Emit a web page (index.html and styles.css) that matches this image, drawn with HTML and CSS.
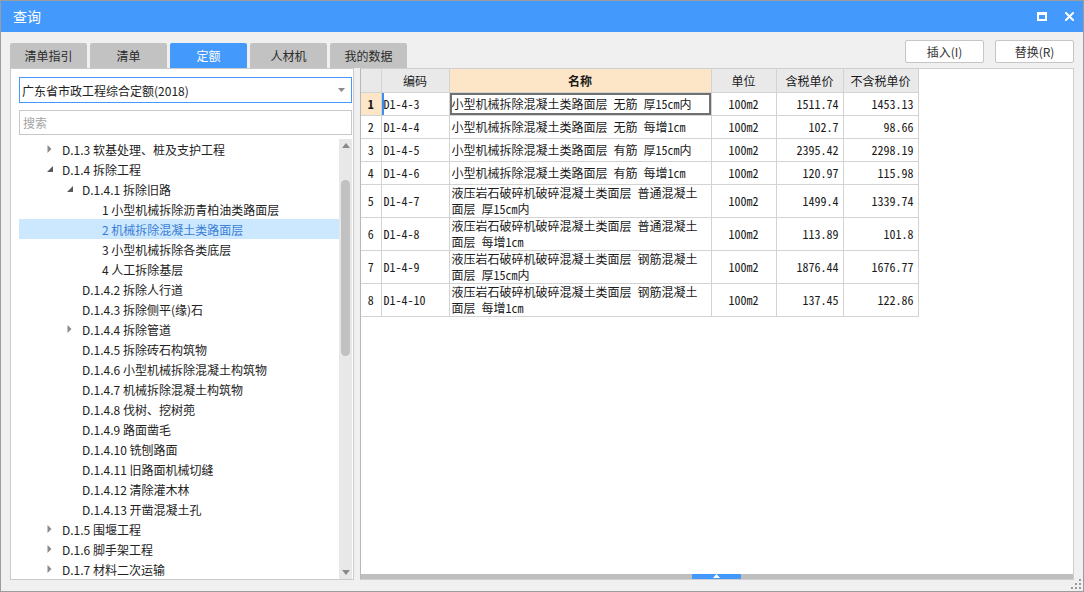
FILE: index.html
```html
<!DOCTYPE html>
<html lang="zh-CN">
<head>
<meta charset="utf-8">
<title>查询</title>
<link rel="stylesheet" href="styles.css">
</head>
<body>
<div class="window">
  <div class="titlebar">
    <span class="title">查询</span>
    <div class="win-controls">
      <svg class="win-btn" width="10" height="9" viewBox="0 0 10 9"><rect x="1" y="1.5" width="8" height="6.5" fill="none" stroke="#fff" stroke-width="2"/><rect x="0" y="0" width="10" height="3" fill="#fff"/></svg>
      <svg class="win-btn" width="9" height="9" viewBox="0 0 9 9"><path d="M1 1 L8 8 M8 1 L1 8" stroke="#fff" stroke-width="2" stroke-linecap="square"/></svg>
    </div>
  </div>
  <div class="body">
    <div class="toolbar">
      <div class="tabs">
        <div class="tab">清单指引</div>
        <div class="tab">清单</div>
        <div class="tab active">定额</div>
        <div class="tab">人材机</div>
        <div class="tab">我的数据</div>
      </div>
      <div class="actions">
        <button class="btn">插入(I)</button>
        <button class="btn">替换(R)</button>
      </div>
    </div>
    <div class="content">
      <div class="left-panel">
        <div class="select">
          <span>广东省市政工程综合定额(2018)</span>
          <svg width="7" height="4" viewBox="0 0 7 4"><path d="M0 0 L7 0 L3.5 4Z" fill="#8a8a8a"/></svg>
        </div>
        <div class="search">搜索</div>
        <div class="tree-wrap">
          <ul class="tree">
            <li class="node lv1"><span class="tw"><svg width="5" height="8" viewBox="0 0 5 8"><path d="M0.5 0 L4.5 4 L0.5 8Z" fill="#8a8a8a"/></svg></span>D.1.3 软基处理、桩及支护工程</li>
            <li class="node lv1"><span class="tw"><svg width="6" height="6" viewBox="0 0 6 6"><path d="M6 0 L6 6 L0 6Z" fill="#5a5a5a"/></svg></span>D.1.4 拆除工程</li>
            <li class="node lv2"><span class="tw"><svg width="6" height="6" viewBox="0 0 6 6"><path d="M6 0 L6 6 L0 6Z" fill="#5a5a5a"/></svg></span>D.1.4.1 拆除旧路</li>
            <li class="node lv3"><span class="tw"></span>1 小型机械拆除沥青柏油类路面层</li>
            <li class="node lv3 selected"><span class="tw"></span>2 机械拆除混凝土类路面层</li>
            <li class="node lv3"><span class="tw"></span>3 小型机械拆除各类底层</li>
            <li class="node lv3"><span class="tw"></span>4 人工拆除基层</li>
            <li class="node lv2"><span class="tw"></span>D.1.4.2 拆除人行道</li>
            <li class="node lv2"><span class="tw"></span>D.1.4.3 拆除侧平(缘)石</li>
            <li class="node lv2"><span class="tw"><svg width="5" height="8" viewBox="0 0 5 8"><path d="M0.5 0 L4.5 4 L0.5 8Z" fill="#8a8a8a"/></svg></span>D.1.4.4 拆除管道</li>
            <li class="node lv2"><span class="tw"></span>D.1.4.5 拆除砖石构筑物</li>
            <li class="node lv2"><span class="tw"></span>D.1.4.6 小型机械拆除混凝土构筑物</li>
            <li class="node lv2"><span class="tw"></span>D.1.4.7 机械拆除混凝土构筑物</li>
            <li class="node lv2"><span class="tw"></span>D.1.4.8 伐树、挖树蔸</li>
            <li class="node lv2"><span class="tw"></span>D.1.4.9 路面凿毛</li>
            <li class="node lv2"><span class="tw"></span>D.1.4.10 铣刨路面</li>
            <li class="node lv2"><span class="tw"></span>D.1.4.11 旧路面机械切缝</li>
            <li class="node lv2"><span class="tw"></span>D.1.4.12 清除灌木林</li>
            <li class="node lv2"><span class="tw"></span>D.1.4.13 开凿混凝土孔</li>
            <li class="node lv1"><span class="tw"><svg width="5" height="8" viewBox="0 0 5 8"><path d="M0.5 0 L4.5 4 L0.5 8Z" fill="#8a8a8a"/></svg></span>D.1.5 围堰工程</li>
            <li class="node lv1"><span class="tw"><svg width="5" height="8" viewBox="0 0 5 8"><path d="M0.5 0 L4.5 4 L0.5 8Z" fill="#8a8a8a"/></svg></span>D.1.6 脚手架工程</li>
            <li class="node lv1"><span class="tw"><svg width="5" height="8" viewBox="0 0 5 8"><path d="M0.5 0 L4.5 4 L0.5 8Z" fill="#8a8a8a"/></svg></span>D.1.7 材料二次运输</li>
          </ul>
          <div class="vscroll">
            <svg class="vs-arrow" width="8" height="5" viewBox="0 0 8 5"><path d="M0 5 L4 0 L8 5Z" fill="#8a8a8a"/></svg>
            <div class="vs-track"><div class="vs-thumb"></div></div>
            <svg class="vs-arrow" width="8" height="5" viewBox="0 0 8 5"><path d="M0 0 L8 0 L4 5Z" fill="#8a8a8a"/></svg>
          </div>
        </div>
      </div>
      <div class="right-panel">
        <div class="grid-area">
          <table class="grid">
            <colgroup>
              <col class="c-no"><col class="c-code"><col class="c-name"><col class="c-unit"><col class="c-tax"><col class="c-notax">
            </colgroup>
            <thead>
              <tr><th></th><th>编码</th><th class="sorted">名称</th><th>单位</th><th>含税单价</th><th>不含税单价</th></tr>
            </thead>
            <tbody>
              <tr class="r1 current"><td class="no">1</td><td class="code">D1-4-3</td><td class="name">小型机械拆除混凝土类路面层 无筋 厚15cm内</td><td class="unit">100m2</td><td class="num">1511.74</td><td class="num">1453.13</td></tr>
              <tr class="r1"><td class="no">2</td><td class="code">D1-4-4</td><td class="name">小型机械拆除混凝土类路面层 无筋 每增1cm</td><td class="unit">100m2</td><td class="num">102.7</td><td class="num">98.66</td></tr>
              <tr class="r1"><td class="no">3</td><td class="code">D1-4-5</td><td class="name">小型机械拆除混凝土类路面层 有筋 厚15cm内</td><td class="unit">100m2</td><td class="num">2395.42</td><td class="num">2298.19</td></tr>
              <tr class="r1"><td class="no">4</td><td class="code">D1-4-6</td><td class="name">小型机械拆除混凝土类路面层 有筋 每增1cm</td><td class="unit">100m2</td><td class="num">120.97</td><td class="num">115.98</td></tr>
              <tr class="r2"><td class="no">5</td><td class="code">D1-4-7</td><td class="name">液压岩石破碎机破碎混凝土类面层 普通混凝土<br>面层 厚15cm内</td><td class="unit">100m2</td><td class="num">1499.4</td><td class="num">1339.74</td></tr>
              <tr class="r2"><td class="no">6</td><td class="code">D1-4-8</td><td class="name">液压岩石破碎机破碎混凝土类面层 普通混凝土<br>面层 每增1cm</td><td class="unit">100m2</td><td class="num">113.89</td><td class="num">101.8</td></tr>
              <tr class="r2"><td class="no">7</td><td class="code">D1-4-9</td><td class="name">液压岩石破碎机破碎混凝土类面层 钢筋混凝土<br>面层 厚15cm内</td><td class="unit">100m2</td><td class="num">1876.44</td><td class="num">1676.77</td></tr>
              <tr class="r2"><td class="no">8</td><td class="code">D1-4-10</td><td class="name">液压岩石破碎机破碎混凝土类面层 钢筋混凝土<br>面层 每增1cm</td><td class="unit">100m2</td><td class="num">137.45</td><td class="num">122.86</td></tr>
            </tbody>
          </table>
        </div>
        <div class="hscroll">
          <div class="hs-thumb"><svg width="7" height="4" viewBox="0 0 7 4"><path d="M0 4 L3.5 0 L7 4Z" fill="#fff"/></svg></div>
        </div>
      </div>
    </div>
  </div>
  <svg class="grip" width="11" height="10" viewBox="0 0 11 10">
    <rect x="8" y="0" width="2" height="2" fill="#9a9a9a"/>
    <rect x="4" y="4" width="2" height="2" fill="#9a9a9a"/><rect x="8" y="4" width="2" height="2" fill="#9a9a9a"/>
    <rect x="0" y="8" width="2" height="2" fill="#9a9a9a"/><rect x="4" y="8" width="2" height="2" fill="#9a9a9a"/><rect x="8" y="8" width="2" height="2" fill="#9a9a9a"/>
  </svg>
</div>
</body>
</html>
```

FILE: styles.css
```css
* { box-sizing: border-box; }
html, body { margin: 0; padding: 0; }
body {
  font-family: "Noto Sans CJK SC", "Noto Sans", sans-serif;
  font-size: 12px;
  color: #222;
  background: #f0f0f0;
}
.window {
  position: relative;
  width: 1084px;
  height: 592px;
  border: 1px solid #9c9c9c;
  background: #f0f0f0;
  display: flex;
  flex-direction: column;
}
.titlebar {
  height: 31px;
  background: #4499fc;
  display: flex;
  align-items: center;
  justify-content: space-between;
  padding: 0 9px 0 12px;
  color: #fff;
}
.title { font-size: 14px; line-height: 31px; }
.win-controls { display: flex; align-items: center; gap: 18px; }
.win-btn { display: block; }
.body {
  flex: 1;
  padding: 8px 9px 13px 9px;
  display: flex;
  flex-direction: column;
}
.toolbar {
  height: 28px;
  display: flex;
  justify-content: space-between;
  align-items: flex-start;
}
.tabs { display: flex; gap: 3px; margin-top: 3px; }
.tab {
  width: 77px;
  height: 25px;
  line-height: 25px;
  text-align: center;
  background: #c2c2c2;
  color: #2a2a2a;
  border-radius: 2px 2px 0 0;
  font-size: 12px;
}
.tab.active { background: #4499fc; color: #fff; }
.actions { display: flex; gap: 11px; }
.btn {
  width: 79px;
  height: 23px;
  border: 1px solid #c6c6c6;
  border-radius: 2px;
  background: #fff;
  font-family: "Noto Sans CJK SC", "Noto Sans", sans-serif;
  font-size: 12px;
  color: #333;
  padding: 0;
}
.content {
  flex: 1;
  display: flex;
  gap: 6px;
  min-height: 0;
}
.left-panel {
  width: 344px;
  background: #fff;
  border: 1px solid #cacaca;
  padding: 8px 1px 0 8px;
  display: flex;
  flex-direction: column;
  min-height: 0;
}
.select {
  height: 26px;
  border: 1px solid #4499fc;
  display: flex;
  align-items: center;
  justify-content: space-between;
  padding: 0 6px 0 2px;
  font-size: 12px;
  color: #222;
}
.search {
  margin-top: 7px;
  height: 25px;
  border: 1px solid #c8c8c8;
  line-height: 23px;
  padding-left: 3px;
  color: #a4a4a4;
}
.tree-wrap {
  margin-top: 4px;
  flex: 1;
  display: flex;
  min-height: 0;
  overflow: hidden;
}
.tree {
  flex: 1;
  list-style: none;
  margin: 0;
  padding: 0;
  overflow: hidden;
}
.node {
  height: 20px;
  display: flex;
  align-items: center;
  white-space: nowrap;
  color: #222;
}
.node.selected { background: #cce8ff; color: #3a7ed6; }
.tw { width: 15px; flex: none; display: flex; align-items: center; }
.tw svg { display: block; }
.lv1 { padding-left: 28px; }
.lv2 { padding-left: 48px; }
.lv3 { padding-left: 68px; }
.vscroll {
  width: 13px;
  flex: none;
  background: #e8e8e8;
  display: flex;
  flex-direction: column;
  align-items: center;
  padding: 4px 0 4px;
}
.vs-arrow { display: block; flex: none; }
.vs-track { flex: 1; width: 100%; padding: 32px 2px 0 2px; }
.vs-thumb { height: 176px; background: #c1c1c1; border-radius: 5px; }
.right-panel {
  flex: 1;
  background: #fff;
  border: 1px solid #cfcfcf;
  border-left-color: #b8b8b8;
  display: flex;
  flex-direction: column;
  min-width: 0;
}
.grid-area { flex: 1; overflow: hidden; }
.grid {
  border-collapse: collapse;
  table-layout: fixed;
  width: 557px;
  font-family: "Noto Sans Mono CJK SC", "Noto Sans CJK SC", sans-serif;
  font-size: 12px;
  color: #1a1a1a;
}
.c-no { width: 20px; }
.c-code { width: 68px; }
.c-name { width: 262px; }
.c-unit { width: 65px; }
.c-tax { width: 67px; }
.c-notax { width: 75px; }
.grid th, .grid td { border: 1px solid #d3d3d3; padding: 0; }
.grid tr > :first-child { border-left: none; }
.grid thead tr th { border-top: none; }
.grid th {
  height: 23px;
  background: #e9e9e9;
  font-weight: normal;
  text-align: center;
  font-family: "Noto Sans CJK SC", sans-serif;
}
.grid th.sorted { background: #fde6c8; font-weight: bold; }
.grid .r1 td { height: 23px; }
.grid .r2 td { height: 33px; }
.grid td { vertical-align: middle; line-height: 16px; }
.grid td.no { text-align: center; }
.grid td.code { padding-left: 2px; }
.grid td.name { padding-left: 2px; white-space: nowrap; }
.grid td.unit { text-align: center; }
.grid td.num { text-align: right; padding-right: 4px; }
.grid tr.current td.no { background: #fde6c8; font-weight: bold; }
.grid tr.current td.code { box-shadow: inset 2px 0 0 #3d8ef2; }
.grid tr.current td.name { box-shadow: inset 0 0 0 2px #707070; }
.hscroll {
  height: 5px;
  background: #bebebe;
  padding-left: 331px;
}
.hs-thumb {
  width: 49px;
  height: 5px;
  background: #4499fc;
  display: flex;
  justify-content: center;
  align-items: flex-start;
}
.hs-thumb svg { display: block; }
.grip { position: absolute; right: 1px; bottom: 2px; }
```
